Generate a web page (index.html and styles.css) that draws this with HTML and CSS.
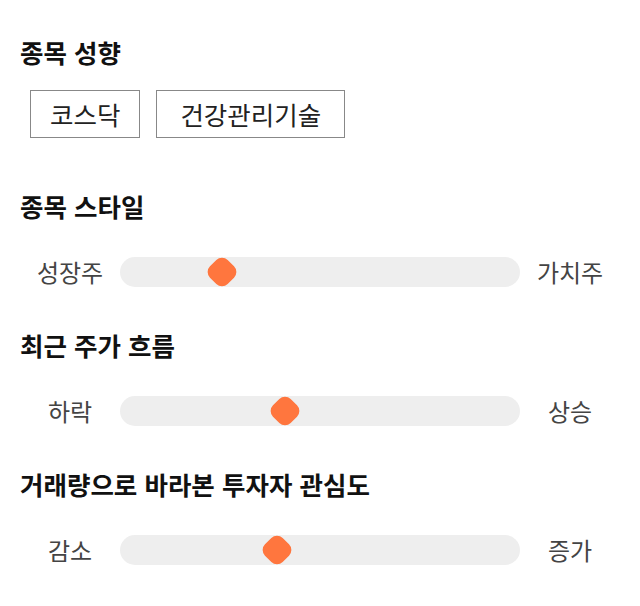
FILE: index.html
```html
<!DOCTYPE html>
<html lang="ko">
<head>
<meta charset="utf-8">
<link rel="stylesheet" href="styles.css">
</head>
<body>
<div class="page">
  <section class="block">
    <h2 class="title">종목 성향</h2>
    <div class="chips">
      <span class="chip">코스닥</span>
      <span class="chip chip-wide">건강관리기술</span>
    </div>
  </section>
  <section class="block">
    <h2 class="title">종목 스타일</h2>
    <div class="slider-row">
      <span class="label">성장주</span>
      <div class="track"><span class="thumb" style="left: 25.5%"></span></div>
      <span class="label">가치주</span>
    </div>
  </section>
  <section class="block">
    <h2 class="title">최근 주가 흐름</h2>
    <div class="slider-row">
      <span class="label">하락</span>
      <div class="track"><span class="thumb" style="left: 41.25%"></span></div>
      <span class="label">상승</span>
    </div>
  </section>
  <section class="block">
    <h2 class="title">거래량으로 바라본 투자자 관심도</h2>
    <div class="slider-row">
      <span class="label">감소</span>
      <div class="track"><span class="thumb" style="left: 39.25%"></span></div>
      <span class="label">증가</span>
    </div>
  </section>
</div>
</body>
</html>
```
FILE: styles.css
```css
html, body {
  margin: 0;
  padding: 0;
  background: #ffffff;
}
body {
  font-family: "Noto Sans CJK KR", "Noto Sans", sans-serif;
  color: #111;
}
.page {
  padding: 36px 20px 0 20px;
  display: flex;
  flex-direction: column;
}
.title {
  margin: 0;
  font-size: 25.5px;
  font-weight: 700;
  line-height: 32px;
  color: #111;
}
.chips {
  display: flex;
  gap: 16px;
  margin: 22px 0 0 10px;
}
.chip {
  box-sizing: border-box;
  height: 48px;
  border: 1px solid #888;
  padding: 0 19px;
  display: flex;
  align-items: center;
  font-size: 25.5px;
  color: #222;
  line-height: 1;
}
.chip-wide {
  padding: 0 23px;
}
.block + .block {
  margin-top: 52px;
}
.block:nth-child(3), .block:nth-child(4) {
  margin-top: 42px;
}
.slider-row {
  display: grid;
  grid-template-columns: 100px 1fr 100px;
  align-items: center;
  margin-top: 35px;
}
.label {
  text-align: center;
  font-size: 24px;
  color: #444;
  line-height: 30px;
}
.track {
  position: relative;
  height: 30px;
  background: #eeeeee;
  border-radius: 15px;
}
.thumb {
  position: absolute;
  top: 50%;
  width: 25px;
  height: 25px;
  background: #ff763e;
  border-radius: 8px;
  transform: translate(-50%, -50%) rotate(45deg);
}
```
